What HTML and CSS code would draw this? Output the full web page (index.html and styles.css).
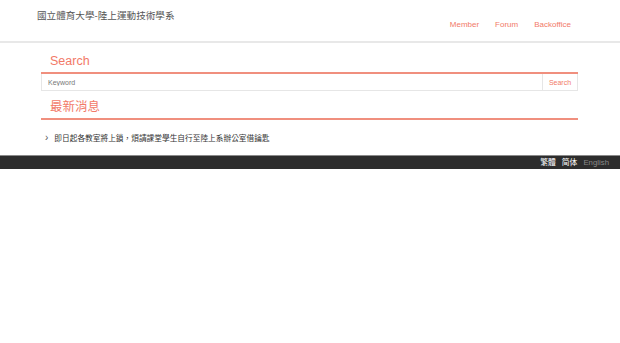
FILE: index.html
```html
<!DOCTYPE html>
<html lang="zh-Hant">
<head>
  <meta charset="UTF-8">
  <meta name="viewport" content="width=device-width, initial-scale=1.0">
  <title>國立體育大學-陸上運動技術學系</title>
  <link rel="stylesheet" href="styles.css">
</head>
<body>
  <header class="topbar">
    <div class="brand">國立體育大學-陸上運動技術學系</div>
    <nav class="nav">
      <a href="#">Member</a>
      <a href="#">Forum</a>
      <a href="#">Backoffice</a>
    </nav>
  </header>

  <main class="content">
    <h2 class="block-title">Search</h2>
    <form class="search" onsubmit="return false">
      <input type="text" placeholder="Keyword">
      <button type="submit">Search</button>
    </form>

    <h2 class="block-title">最新消息</h2>
    <ul class="news">
      <li><a href="#">即日起各教室將上鎖，煩請課堂學生自行至陸上系辦公室借鑰匙</a></li>
    </ul>
  </main>

  <footer class="footer">
    <a href="#" class="on">繁體</a>
    <a href="#" class="on">简体</a>
    <a href="#">English</a>
  </footer>
</body>
</html>
```

FILE: styles.css
```css
body { margin: 0; font-family: "Liberation Sans", "Noto Sans CJK TC", sans-serif; background: #fff; color: #333; }
a { text-decoration: none; }
.topbar { height: 41px; border-bottom: 2px solid #e8e8e8; display: flex; justify-content: space-between; padding: 0 49px 0 37px; }
.brand { font-size: 9.6px; color: #555; padding-top: 9px; line-height: 14px; }
.nav { display: flex; gap: 16px; padding-top: 19px; }
.nav a { font-size: 8px; color: #f27a68; line-height: 12px; }
.content { margin: 0 42px 0 41px; padding-top: 2px; }
.block-title { font-size: 12.5px; font-weight: normal; color: #f27a68; margin: 0; padding: 8px 0 3px 9px; line-height: 16px; border-bottom: 2px solid #f08f7e; }
.search { display: flex; height: 16px; border: 1px solid #e6e6e6; border-top: none; }
.search input { flex: 1; border: none; padding: 0 6px; font-size: 7px; font-family: inherit; color: #555; outline: none; }
.search input::placeholder { color: #777; }
.search button { width: 35px; border: none; border-left: 1px solid #e6e6e6; background: #fff; color: #f27a68; font-size: 7px; font-family: inherit; padding: 0; }
.news { list-style: none; margin: 0; padding: 11px 0 0 4px; }
.news li { font-size: 7.7px; line-height: 13px; }
.news li::before { content: "›"; color: #555; margin-right: 6px; font-size: 10px; }
.news a { color: #333; }
.footer { margin-top: 10px; height: 13px; background: #2d2d2d; border-top: 1px solid #8a8a8a; display: flex; justify-content: flex-end; align-items: center; gap: 6px; padding-right: 11px; }
.footer a { font-size: 7.8px; color: #8a8a8a; line-height: 12px; }
.footer a.on { color: #fff; }
```
